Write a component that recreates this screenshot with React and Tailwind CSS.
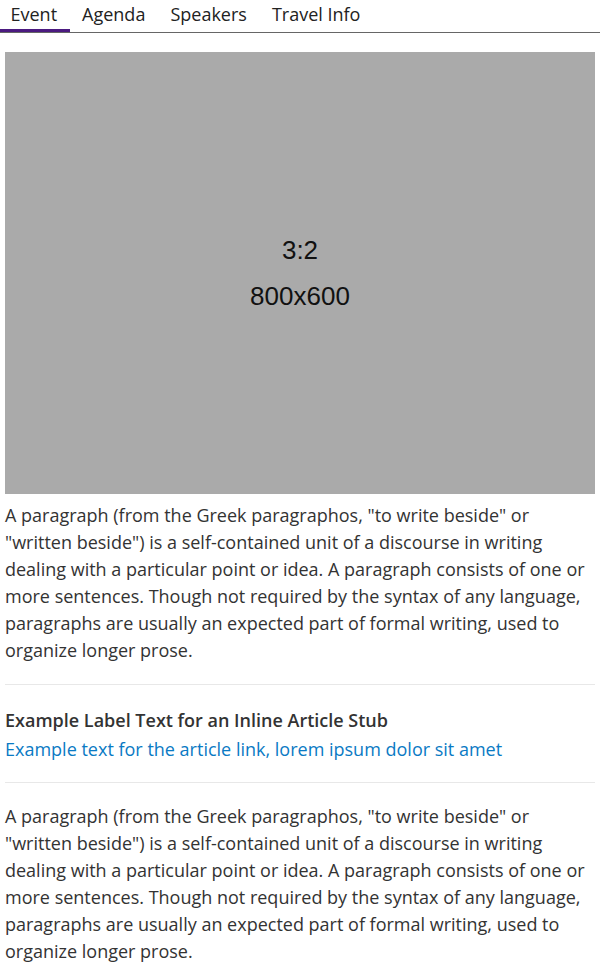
const para =
  'A paragraph (from the Greek paragraphos, "to write beside" or "written beside") is a self-contained unit of a discourse in writing dealing with a particular point or idea. A paragraph consists of one or more sentences. Though not required by the syntax of any language, paragraphs are usually an expected part of formal writing, used to organize longer prose.';

const tabs = ["Event", "Agenda", "Speakers", "Travel Info"];

export default function App() {
  return (
    <div className="bg-white text-[#333] font-['Open_Sans',sans-serif] w-[600px] overflow-hidden">
      {/* Tabs */}
      <div className="flex border-b border-[#666] h-[33px] -ml-[2px]">
        {tabs.map((t, i) => (
          <div
            key={t}
            className={`px-[12.5px] text-[18px] leading-[29px] text-[#222] ${i === 0 ? "border-b-[3px] border-[#4b1a80]" : ""}`}
          >
            {t}
          </div>
        ))}
      </div>

      <div className="px-[5px] pt-[19px]">
        {/* Placeholder image */}
        <div className="h-[442px] bg-[#aaaaaa] flex flex-col items-center justify-center gap-[16px] font-['Liberation_Sans',sans-serif] text-[26px] text-[#111] leading-[30px]">
          <span>3:2</span>
          <span>800x600</span>
        </div>

        <p className="mt-[8px] text-[18px] leading-[27px]">{para}</p>

        <div className="mt-[20px] border-t border-[#e8e8e8]" />

        <div className="pt-[21px] pb-[18px]">
          <div className="text-[18px] leading-[29px] font-semibold text-[#333]">
            Example Label Text for an Inline Article Stub
          </div>
          <a className="block text-[18px] leading-[29px] text-[#0a7ac4]">
            Example text for the article link, lorem ipsum dolor sit amet
          </a>
        </div>

        <div className="border-t border-[#e8e8e8]" />

        <p className="mt-[20px] text-[18px] leading-[27px]">{para}</p>
      </div>
    </div>
  );
}
